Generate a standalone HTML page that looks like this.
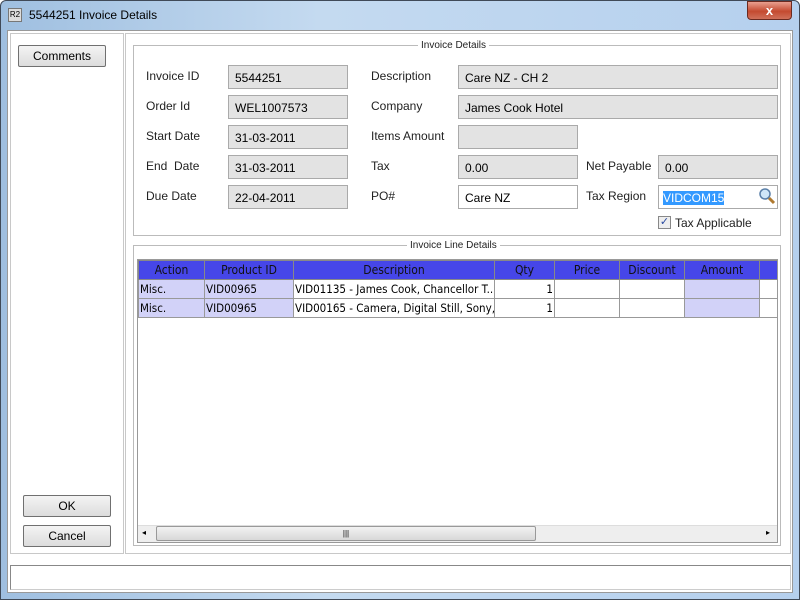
<!DOCTYPE html>
<html><head><style>
*{box-sizing:border-box;margin:0;padding:0}
body{width:800px;height:600px;overflow:hidden;background:#fff;font-family:"Liberation Sans",sans-serif;font-size:12px;color:#000;position:relative}
.a{position:absolute}
.lb{position:absolute;font-size:12px;color:#222}
.f{position:absolute;height:24px;border:1px solid #aaa;background:#e3e3e3;padding:5px 0 0 6px;font-size:12px}
.w{background:#fff}
.btn{position:absolute;border:1px solid #707070;border-radius:2px;background:linear-gradient(#f4f4f4,#dcdcdc);text-align:center;font-size:12px;padding-top:3px}
.grp{position:absolute;border:1px solid #bbb}
.gt{position:absolute;background:#fff;font-size:10px;padding:0 3px;color:#222}
table{border-collapse:collapse;font-size:11.5px;font-family:"DejaVu Sans Condensed","Liberation Sans",sans-serif}
td{border:1px solid #999;height:19px;padding:0 1px;white-space:nowrap;overflow:hidden}
th{background:#4646e8;border:1px solid #888;font-weight:normal;height:19px;color:#111;font-size:12px}
.p{background:#d2d2f8}
</style></head><body>
<div class="a" style="left:0;top:0;width:800px;height:600px;background:linear-gradient(90deg,#9fbfe0,#c4daf0 40%,#b5d0ee);border-radius:6px 6px 0 0;border:1px solid #404a58"></div>
<div class="a" style="left:8px;top:8px;width:14px;height:14px;border:1px solid #777;background:#ddd;font-size:8px;line-height:12px;text-align:center">R2</div>
<div class="a" style="left:29px;top:8px;font-size:12px">5544251 Invoice Details</div>
<div class="a" style="left:747px;top:1px;width:45px;height:19px;border:1px solid #6b2a20;border-radius:0 0 4px 4px;background:linear-gradient(#e9a08f,#c44a30 55%,#d0705a);color:#fff;font-weight:bold;text-align:center;font-size:13px;line-height:17px">x</div>
<div class="a" style="left:7px;top:30px;width:786px;height:563px;background:#fff;border:1px solid #999"></div>
<div class="a" style="left:10px;top:33px;width:114px;height:521px;border:1px solid #c8c8c8"></div>
<div class="a" style="left:125px;top:33px;width:666px;height:521px;border:1px solid #c8c8c8"></div>
<div class="btn" style="left:18px;top:45px;width:88px;height:22px">Comments</div>
<div class="btn" style="left:23px;top:495px;width:88px;height:22px">OK</div>
<div class="btn" style="left:23px;top:525px;width:88px;height:22px">Cancel</div>

<div class="grp" style="left:133px;top:45px;width:648px;height:191px"></div>
<div class="gt" style="left:418px;top:40px">Invoice Details</div>
<div class="lb" style="left:146px;top:69px">Invoice ID</div><div class="f" style="left:228px;top:65px;width:120px">5544251</div>
<div class="lb" style="left:146px;top:99px">Order Id</div><div class="f" style="left:228px;top:95px;width:120px">WEL1007573</div>
<div class="lb" style="left:146px;top:129px">Start Date</div><div class="f" style="left:228px;top:125px;width:120px">31-03-2011</div>
<div class="lb" style="left:146px;top:159px">End &nbsp;Date</div><div class="f" style="left:228px;top:155px;width:120px">31-03-2011</div>
<div class="lb" style="left:146px;top:189px">Due Date</div><div class="f" style="left:228px;top:185px;width:120px">22-04-2011</div>
<div class="lb" style="left:371px;top:69px">Description</div><div class="f" style="left:458px;top:65px;width:320px">Care NZ - CH 2</div>
<div class="lb" style="left:371px;top:99px">Company</div><div class="f" style="left:458px;top:95px;width:320px">James Cook Hotel</div>
<div class="lb" style="left:371px;top:129px">Items Amount</div><div class="f" style="left:458px;top:125px;width:120px"></div>
<div class="lb" style="left:371px;top:159px">Tax</div><div class="f" style="left:458px;top:155px;width:120px">0.00</div>
<div class="lb" style="left:371px;top:189px">PO#</div><div class="f w" style="left:458px;top:185px;width:120px">Care NZ</div>
<div class="lb" style="left:586px;top:159px">Net Payable</div><div class="f" style="left:658px;top:155px;width:120px">0.00</div>
<div class="lb" style="left:586px;top:189px">Tax Region</div><div class="f w" style="left:658px;top:185px;width:120px;padding-left:4px"><span style="background:#3399ff;color:#fff">VIDCOM15</span></div>
<svg class="a" style="left:757px;top:186px" width="20" height="20"><circle cx="8" cy="8" r="5" fill="#cfe6f8" stroke="#5a7fa8" stroke-width="1.5"/><path d="M12 12 L17 17" stroke="#b07a30" stroke-width="3"/></svg>
<div class="a" style="left:658px;top:216px;width:13px;height:13px;border:1px solid #888;background:#eee;font-size:11px;line-height:11px;text-align:center;color:#2a4aa0">✓</div>
<div class="lb" style="left:675px;top:216px">Tax Applicable</div>

<div class="grp" style="left:133px;top:245px;width:648px;height:301px"></div>
<div class="gt" style="left:407px;top:240px">Invoice Line Details</div>
<div class="a" style="left:137px;top:259px;width:641px;height:284px;border:1px solid #999;overflow:hidden">
<table style="width:660px;table-layout:fixed">
<colgroup><col style="width:66px"><col style="width:89px"><col style="width:201px"><col style="width:60px"><col style="width:65px"><col style="width:65px"><col style="width:75px"><col style="width:39px"></colgroup>
<tr><th>Action</th><th>Product ID</th><th>Description</th><th>Qty</th><th>Price</th><th>Discount</th><th>Amount</th><th></th></tr>
<tr><td class="p">Misc.</td><td class="p">VID00965</td><td>VID01135 - James Cook, Chancellor T...</td><td style="text-align:right">1</td><td></td><td></td><td class="p"></td><td></td></tr>
<tr><td class="p">Misc.</td><td class="p">VID00965</td><td>VID00165 - Camera, Digital Still, Sony,...</td><td style="text-align:right">1</td><td></td><td></td><td class="p"></td><td></td></tr>
</table>
<div class="a" style="left:0;top:265px;width:639px;height:17px;background:#eee;border-top:1px solid #ddd"></div>
<div class="a" style="left:18px;top:266px;width:380px;height:15px;border:1px solid #999;border-radius:2px;background:linear-gradient(#f2f2f2,#d8d8d8);text-align:center;font-size:8px;line-height:13px">|||</div>
<div class="a" style="left:4px;top:268px;font-size:8px">◂</div>
<div class="a" style="left:628px;top:268px;font-size:8px">▸</div>
</div>
<div class="a" style="left:10px;top:565px;width:781px;height:25px;border:1px solid #888;border-right-color:#ccc;border-bottom-color:#ccc"></div>
</body></html>
